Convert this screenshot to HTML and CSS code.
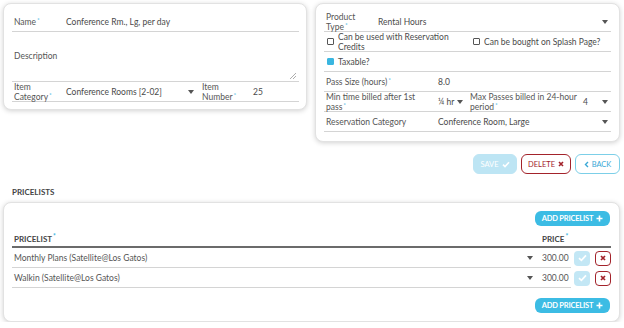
FILE: index.html
```html
<!DOCTYPE html>
<html>
<head>
<meta charset="utf-8">
<link rel="stylesheet" href="styles.css">
</head>
<body>
<div class="page">
  <div class="top">
    <div class="card card-left">
      <div class="row">
        <div class="label">Name<span class="req">*</span></div>
        <div class="value">Conference Rm., Lg, per day</div>
      </div>
      <div class="row row-text">
        <div class="label">Description</div>
        <svg class="resize" width="6" height="6" viewBox="0 0 6 6"><path d="M6 0L0 6M6 3L3 6" stroke="#999" stroke-width="0.8"/></svg>
      </div>
      <div class="row">
        <div class="label">Item<br>Category<span class="req">*</span></div>
        <div class="value value-cat">Conference Rooms [2-02]</div>
        <span class="caret"></span>
        <div class="label label-num">Item<br>Number<span class="req">*</span></div>
        <div class="value grow">25</div>
      </div>
    </div>

    <div class="card card-right">
      <div class="row">
        <div class="label">Product<br>Type<span class="req">*</span></div>
        <div class="value grow">Rental Hours</div>
        <span class="caret"></span>
      </div>
      <div class="row">
        <div class="check-item first">
          <span class="box"></span>
          <span class="check-text">Can be used with Reservation<br>Credits</span>
        </div>
        <div class="check-item">
          <span class="box"></span>
          <span>Can be bought on Splash Page?</span>
        </div>
      </div>
      <div class="row">
        <div class="check-item">
          <span class="box box-on"></span>
          <span>Taxable?</span>
        </div>
      </div>
      <div class="row">
        <div class="label label-wide">Pass Size (hours)<span class="req">*</span></div>
        <div class="value grow">8.0</div>
      </div>
      <div class="row">
        <div class="label label-wide">Min time billed after 1st<br>pass<span class="req">*</span></div>
        <div class="mini-select"><span>¼ hr</span><span class="caret"></span></div>
        <div class="label label-max">Max Passes billed in 24-hour<br>period<span class="req">*</span></div>
        <div class="value grow">4</div>
        <span class="caret"></span>
      </div>
      <div class="row">
        <div class="label label-wide">Reservation Category</div>
        <div class="value grow">Conference Room, Large</div>
        <span class="caret"></span>
      </div>
    </div>
  </div>

  <div class="actions">
    <button class="btn btn-save">SAVE <svg width="8" height="7" viewBox="0 0 8 7"><path d="M1 3.6L3 5.6L7 1.2" fill="none" stroke="#fff" stroke-width="1.6"/></svg></button>
    <button class="btn btn-delete">DELETE <svg width="6" height="6" viewBox="0 0 6 6"><path d="M1 1L5 5M5 1L1 5" stroke="#a3232b" stroke-width="1.6"/></svg></button>
    <button class="btn btn-back"><svg width="5" height="7" viewBox="0 0 5 7"><path d="M4 1L1.5 3.5L4 6" fill="none" stroke="#3aa8d6" stroke-width="1.4"/></svg> BACK</button>
  </div>

  <div class="section-title">PRICELISTS</div>

  <div class="card card-bottom">
    <div class="add-row">
      <button class="btn btn-add">ADD PRICELIST <svg width="7" height="7" viewBox="0 0 7 7"><path d="M3.5 0.5V6.5M0.5 3.5H6.5" stroke="#fff" stroke-width="1.6"/></svg></button>
    </div>
    <div class="thead">
      <div class="th grow">PRICELIST<span class="req">*</span></div>
      <div class="th th-price">PRICE<span class="req">*</span></div>
    </div>
    <div class="trow">
      <div class="tmain">
        <div class="grow">Monthly Plans (Satellite@Los Gatos)</div>
        <span class="caret"></span>
        <div class="price">300.00</div>
      </div>
      <span class="icon-btn ok"><svg width="9" height="8" viewBox="0 0 9 8"><path d="M1 4.2L3.4 6.4L8 1.4" fill="none" stroke="#fff" stroke-width="1.7"/></svg></span>
      <span class="icon-btn del"><svg width="6" height="6" viewBox="0 0 6 6"><path d="M1 1L5 5M5 1L1 5" stroke="#a3232b" stroke-width="1.7"/></svg></span>
    </div>
    <div class="trow">
      <div class="tmain">
        <div class="grow">Walkin (Satellite@Los Gatos)</div>
        <span class="caret"></span>
        <div class="price">300.00</div>
      </div>
      <span class="icon-btn ok"><svg width="9" height="8" viewBox="0 0 9 8"><path d="M1 4.2L3.4 6.4L8 1.4" fill="none" stroke="#fff" stroke-width="1.7"/></svg></span>
      <span class="icon-btn del"><svg width="6" height="6" viewBox="0 0 6 6"><path d="M1 1L5 5M5 1L1 5" stroke="#a3232b" stroke-width="1.7"/></svg></span>
    </div>
    <div class="add-row add-row-bottom">
      <button class="btn btn-add">ADD PRICELIST <svg width="7" height="7" viewBox="0 0 7 7"><path d="M3.5 0.5V6.5M0.5 3.5H6.5" stroke="#fff" stroke-width="1.6"/></svg></button>
    </div>
  </div>
</div>
</body>
</html>
```
FILE: styles.css
```css
* { box-sizing: border-box; }

body {
  margin: 0;
  background: #fff;
  font-family: Lato, "Open Sans", sans-serif;
  font-size: 8.5px;
  color: #4a4a4a;
}

.page {
  padding: 3px 4px 0 3px;
}

.top {
  display: flex;
  align-items: flex-start;
  gap: 8px;
}

.card {
  background: #fff;
  border: 1px solid #e2e2e2;
  border-radius: 8px;
  box-shadow: 0 1px 5px rgba(0, 0, 0, 0.18);
}

.card-left {
  width: 304px;
  padding: 8px 7px 7px 8px;
}

.card-right {
  width: 305px;
  padding: 8px 8px 9px 8px;
}

.row {
  display: flex;
  align-items: center;
  height: 20px;
  padding: 0 2px;
  border-bottom: 1px solid #d4d4d4;
}

.row-text {
  height: 50px;
  padding-bottom: 2px;
}

.resize {
  margin-left: auto;
  align-self: flex-end;
  margin-right: 1px;
}

.label {
  flex: none;
  width: 52px;
  line-height: 10px;
  color: #555;
}

.label-num { width: 51px; }

.label-wide {
  width: 112px;
  padding-right: 12px;
}

.label-max {
  width: 113px;
  padding-right: 2px;
}

.value {
  color: #4a4a4a;
  white-space: nowrap;
}

.value-cat { width: 122px; }

.grow { flex: 1; }

.req {
  color: #2fb1e1;
  font-size: 6.5px;
  line-height: 0;
  vertical-align: 3px;
  margin-left: 1px;
}

.caret {
  flex: none;
  width: 0;
  height: 0;
  border-left: 3.5px solid transparent;
  border-right: 3.5px solid transparent;
  border-top: 4px solid #555;
  margin-right: 1px;
}

.value-cat + .caret { margin-right: 8px; }

.check-item {
  display: flex;
  align-items: center;
  gap: 4px;
  padding-left: 1px;
  color: #4a4a4a;
}

.check-item.first { width: 146px; }

.check-text {
  line-height: 10px;
}

.box {
  flex: none;
  width: 7px;
  height: 7px;
  border: 1px solid #555;
  border-radius: 1px;
}

.box-on {
  background: #3ab6e0;
  border-color: #3ab6e0;
}

.mini-select {
  flex: none;
  width: 32px;
  display: flex;
  align-items: center;
  gap: 3px;
}

.actions {
  display: flex;
  justify-content: flex-end;
  gap: 4px;
  margin-top: 12px;
}

.btn {
  font-family: Lato, "Open Sans", sans-serif;
  font-size: 7.5px;
  height: 20px;
  border-radius: 6px;
  display: inline-flex;
  align-items: center;
  justify-content: center;
  gap: 3px;
  padding: 0;
  background: #fff;
  cursor: pointer;
}

.btn-save {
  width: 44px;
  background: #bde5f4;
  border: 1px solid #bde5f4;
  color: #fff;
}

.btn-delete {
  width: 50px;
  border: 1.5px solid #a3232b;
  color: #a3232b;
}

.btn-back {
  width: 45px;
  border: 1.5px solid #7ccfe8;
  color: #3aa8d6;
}

.section-title {
  font-weight: 700;
  font-size: 8px;
  line-height: 10px;
  color: #444;
  margin: 13px 0 5px 9px;
}

.card-bottom {
  width: 617px;
  padding: 8px 8px 8px 8px;
}

.add-row {
  display: flex;
  justify-content: flex-end;
  padding-right: 1px;
}

.add-row-bottom { margin-top: 10px; }

.btn-add {
  width: 75px;
  height: 15px;
  border: none;
  border-radius: 6px;
  background: #3cbce4;
  color: #fff;
  font-weight: 700;
  letter-spacing: -0.2px;
}

.thead {
  display: flex;
  align-items: flex-end;
  height: 22px;
  padding: 0 2px 2px;
  border-bottom: 2px solid #6b6b6b;
}

.th {
  font-weight: 700;
  font-size: 8px;
  line-height: 10px;
  color: #444;
}

.th-price { width: 67px; }

.trow {
  display: flex;
  align-items: center;
  height: 20px;
}

.tmain {
  flex: 1;
  height: 20px;
  display: flex;
  align-items: center;
  padding-left: 2px;
  border-bottom: 1px solid #d4d4d4;
  color: #555;
}

.tmain .caret { margin-right: 9px; }

.price { width: 29px; }

.icon-btn {
  flex: none;
  width: 16px;
  height: 15px;
  border-radius: 4px;
  display: flex;
  align-items: center;
  justify-content: center;
}

.ok {
  margin-left: 3px;
  background: #c3e7f5;
}

.del {
  margin-left: 5px;
  border: 1.5px solid #a3232b;
}
```
